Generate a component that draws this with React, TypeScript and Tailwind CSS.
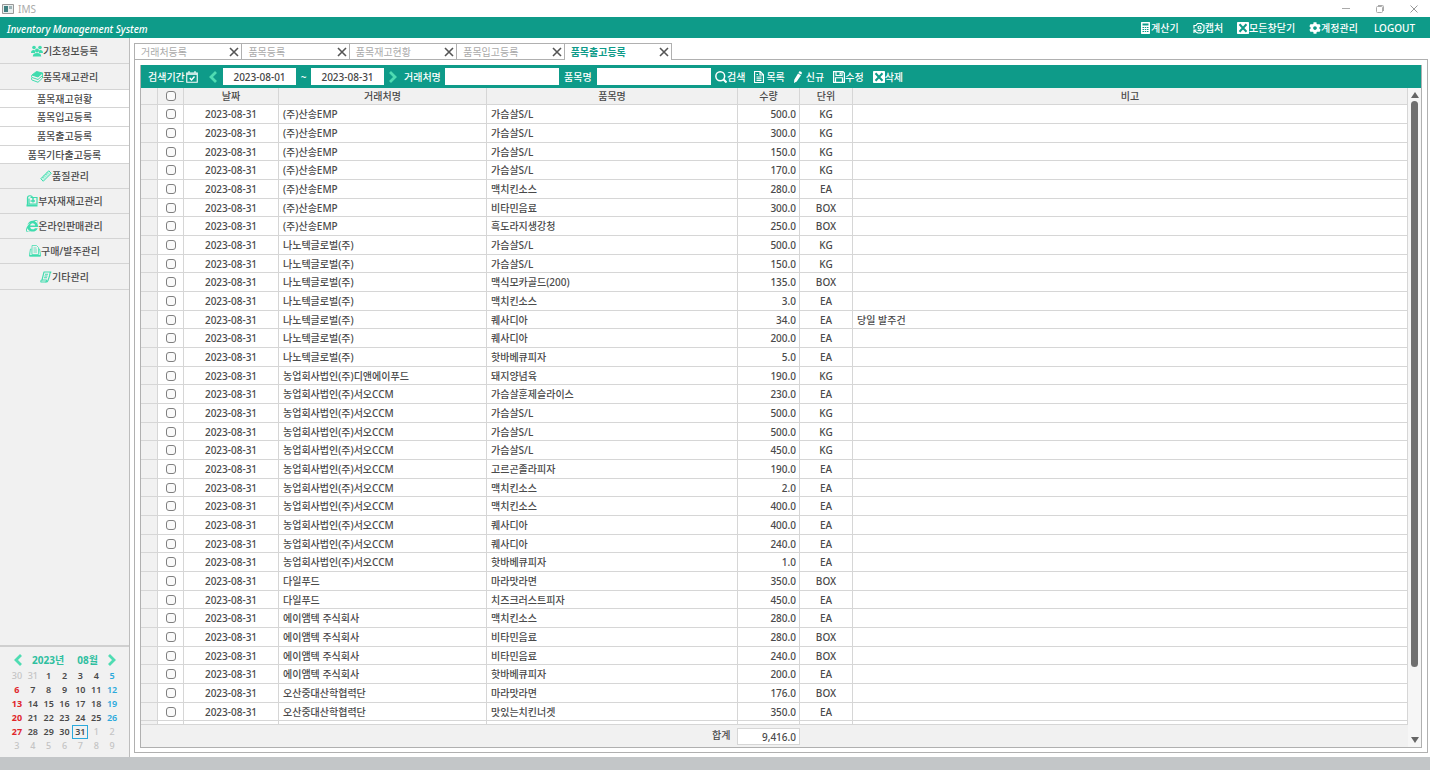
import React, { useState } from 'react';
import { FaInternetExplorer, FaCog } from 'react-icons/fa';

type IconProps = { className?: string };

const PeopleIcon: React.FC<IconProps> = ({ className }) => (
  <svg className={className} viewBox="0 0 24 24" fill="currentColor">
    <circle cx="6" cy="5" r="3.600" />
    <circle cx="18" cy="5" r="3.600" />
    <path d="M0 16c0-4 2-6 5-6 2 0 3 1 3.500 2.500L8 16H0zM24 16c0-4-2-6-5-6-2 0-3 1-3.500 2.500L16 16h8z" />
    <circle cx="12" cy="11" r="4" />
    <path d="M3.500 23c0-5 3.500-7 8.500-7s8.500 2 8.500 7z" />
  </svg>
);

const BooksIcon: React.FC<IconProps> = ({ className }) => (
  <svg className={className} viewBox="0 0 24 24" fill="none" stroke="currentColor" strokeWidth={2} strokeLinejoin="round">
    <path d="M2 8 11 1l12 3-9 8z" fill="currentColor" />
    <path d="M2 8c-2 1-1 5 0 5l12 4 9-8V4M2 13c-2 1-1 5 0 5l12 4.500 9-8.500V9" />
  </svg>
);

const RulerIcon: React.FC<IconProps> = ({ className }) => (
  <svg className={className} viewBox="0 0 24 24" stroke="currentColor" strokeWidth={2}>
    <path d="M1.500 17.500 17.500 1.500l5 5-16 16z" fill="#c4f3e4" />
    <path d="m5 14 2.500 2.500M8 11l2 2M11 8l2.500 2.500M14 5l2 2" fill="none" />
  </svg>
);

const StockIcon: React.FC<IconProps> = ({ className }) => (
  <svg className={className} viewBox="0 0 24 24" fill="none" stroke="currentColor" strokeWidth={2.4}>
    <path d="M3 20V7a5 5 0 0 1 10-1M9 5h13v13H6V7" />
    <path d="M14 6v9M9 12h9" strokeWidth={3} />
    <path d="M1 19h22v4H1z" fill="currentColor" stroke="none" />
  </svg>
);

const OrderIcon: React.FC<IconProps> = ({ className }) => (
  <svg className={className} viewBox="0 0 24 24" stroke="currentColor" strokeWidth={1.5}>
    <path d="M5 8H3L1 18v4h22v-4L21 8h-2" fill="#c4f3e4" />
    <path d="M6 19V1h9l4 4v14z" fill="#f1f1f1" />
    <path d="M9 6h6M9 10h7M9 14h7" fill="none" />
    <path d="M1 20h22v3H1z" fill="currentColor" stroke="none" />
  </svg>
);

const ScrollIcon: React.FC<IconProps> = ({ className }) => (
  <svg className={className} viewBox="0 0 24 24" fill="none" stroke="currentColor" strokeWidth={2.2} strokeLinejoin="round">
    <path d="M8 2h14c-3 2-2 4-3 8l-3 9c-1 3-3 3-4 3H2c-1-2 0-4 2-4z" />
    <path d="M10 6.500h6M9 10h6M8 13.500h6M4 18h9c0 2-1 4-2 4" />
  </svg>
);

const CalendarCheckIcon: React.FC<IconProps> = ({ className }) => (
  <svg className={className} viewBox="0 0 24 24" fill="none" stroke="currentColor" strokeWidth={2.2}>
    <path d="M1.500 4h21v18.500h-21zM6 0v5M18 0v5M2 6.500h20" />
    <path d="m7.500 14 3.500 4 6-7" strokeWidth={2.8} />
  </svg>
);

const CalculatorIcon: React.FC<IconProps> = ({ className }) => (
  <svg className={className} viewBox="0 0 18 24" fill="currentColor" fillRule="evenodd">
    <path d="M1 0h16l1 1v22l-1 1H1l-1-1V1zM3 3v4h12V3zM3 10v2h3v-2zm4.500 0v2h3v-2zm4.500 0v2h3v-2zM3 14v2h3v-2zm4.500 0v2h3v-2zm4.500 0v2h3v-2zM3 18v2h3v-2zm4.500 0v2h3v-2zm4.500 0v2h3v-2z" />
  </svg>
);

const CaptureIcon: React.FC<IconProps> = ({ className }) => (
  <svg className={className} viewBox="0 0 24 24" fill="none" stroke="currentColor" strokeWidth={2.4}>
    <path d="M2 13V7h4l3-4h8l2 3h3v9c0 4-2 6-5 7H8M2 22v-6h5M3 17c2 3 4 4 7 5" />
    <circle cx="13" cy="11" r="3" />
    <path d="M9 17h8" />
  </svg>
);

const BoxedXIcon: React.FC<IconProps> = ({ className }) => (
  <svg className={className} viewBox="0 0 24 24" fill="none">
    <rect width="24" height="24" rx="1.500" fill="currentColor" />
    <path d="m5 4.500 14 15M19 4.500l-14 15" stroke="#0e9b89" strokeWidth={4} />
  </svg>
);

const SearchIcon: React.FC<IconProps> = ({ className }) => (
  <svg className={className} viewBox="0 0 24 24" fill="none" stroke="currentColor" strokeWidth={3}>
    <circle cx="10.500" cy="10.500" r="8.800" />
    <path d="m17 17 6 6" strokeWidth={4} />
  </svg>
);

const DocumentIcon: React.FC<IconProps> = ({ className }) => (
  <svg className={className} viewBox="0 0 20 24" fill="none" stroke="currentColor" strokeWidth={2.4}>
    <path d="M1 1h11.500L19 7.500V23H1zM12 1v7h7M5 7h3M5 12h10M5 15.500h10M5 19h10" />
  </svg>
);

const PencilIcon: React.FC<IconProps> = ({ className }) => (
  <svg className={className} viewBox="0 0 16 24" fill="currentColor">
    <path d="M10.500 1c1-1.500 5.500 1 5.500 3l-1.500 3-5.500-3zM8 5l6 3.500L5.500 21 0 24l.5-6.500z" />
  </svg>
);

const SaveIcon: React.FC<IconProps> = ({ className }) => (
  <svg className={className} viewBox="0 0 24 24" fill="none" stroke="currentColor" strokeWidth={2.4}>
    <path d="M1.200 1.200H20l2.800 3v18.600H1.200zM6 1v8h12V1M5 23V13.500h14V23" />
    <path d="M13 3h3v4h-3z" fill="currentColor" stroke="none" />
  </svg>
);

const CrossIcon: React.FC<IconProps> = ({ className }) => (
  <svg className={className} viewBox="0 0 10 10" fill="none" stroke="currentColor" strokeWidth={1.6}>
    <path d="m1 1 8 8M9 1 1 9" />
  </svg>
);

const ChevronLeft: React.FC = () => (
  <svg className="h-3 w-2.5 text-[#4fdcb2]" viewBox="0 0 10 12" fill="none" stroke="currentColor" strokeWidth={2.8}>
    <path d="M8 1 3 6l5 5" />
  </svg>
);

const ChevronRight: React.FC = () => (
  <svg className="h-3 w-2.5 text-[#4fdcb2]" viewBox="0 0 10 12" fill="none" stroke="currentColor" strokeWidth={2.8}>
    <path d="m2 1 5 5-5 5" />
  </svg>
);

const upperMenu = [
  { label: '기초정보등록', Icon: PeopleIcon },
  { label: '품목재고관리', Icon: BooksIcon },
];
const subMenu = ['품목재고현황', '품목입고등록', '품목출고등록', '품목기타출고등록'];
const lowerMenu = [
  { label: '품질관리', Icon: RulerIcon },
  { label: '부자재재고관리', Icon: StockIcon },
  { label: '온라인판매관리', Icon: FaInternetExplorer },
  { label: '구매/발주관리', Icon: OrderIcon },
  { label: '기타관리', Icon: ScrollIcon },
];

const tabs = ['거래처등록', '품목등록', '품목재고현황', '품목입고등록', '품목출고등록'];

const A = '(주)산송EMP';
const B = '나노텍글로벌(주)';
const C = '농업회사법인(주)서오CCM';
const D = '다일푸드';
const E = '에이앰텍 주식회사';
const F = '오산중대산학협력단';

// customer, item, quantity, unit, note
const rows: string[][] = [
  [A, '가슴살S/L', '500.0', 'KG'],
  [A, '가슴살S/L', '300.0', 'KG'],
  [A, '가슴살S/L', '150.0', 'KG'],
  [A, '가슴살S/L', '170.0', 'KG'],
  [A, '맥치킨소스', '280.0', 'EA'],
  [A, '비타민음료', '300.0', 'BOX'],
  [A, '흑도라지생강청', '250.0', 'BOX'],
  [B, '가슴살S/L', '500.0', 'KG'],
  [B, '가슴살S/L', '150.0', 'KG'],
  [B, '맥식모카골드(200)', '135.0', 'BOX'],
  [B, '맥치킨소스', '3.0', 'EA'],
  [B, '퀘사디아', '34.0', 'EA', '당일 발주건'],
  [B, '퀘사디아', '200.0', 'EA'],
  [B, '핫바베큐피자', '5.0', 'EA'],
  ['농업회사법인(주)디앤에이푸드', '돼지양념육', '190.0', 'KG'],
  [C, '가슴살훈제슬라이스', '230.0', 'EA'],
  [C, '가슴살S/L', '500.0', 'KG'],
  [C, '가슴살S/L', '500.0', 'KG'],
  [C, '가슴살S/L', '450.0', 'KG'],
  [C, '고르곤졸라피자', '190.0', 'EA'],
  [C, '맥치킨소스', '2.0', 'EA'],
  [C, '맥치킨소스', '400.0', 'EA'],
  [C, '퀘사디아', '400.0', 'EA'],
  [C, '퀘사디아', '240.0', 'EA'],
  [C, '핫바베큐피자', '1.0', 'EA'],
  [D, '마라맛라면', '350.0', 'BOX'],
  [D, '치즈크러스트피자', '450.0', 'EA'],
  [E, '맥치킨소스', '280.0', 'EA'],
  [E, '비타민음료', '280.0', 'BOX'],
  [E, '비타민음료', '240.0', 'BOX'],
  [E, '핫바베큐피자', '200.0', 'EA'],
  [F, '마라맛라면', '176.0', 'BOX'],
  [F, '맛있는치킨너겟', '350.0', 'EA'],
];

const checkboxClass =
  'block mx-auto w-[10px] h-[10px] appearance-none rounded-[3px] border border-[#808080] bg-[#fafafa] checked:bg-[#0e9b89]';

const Sidebar: React.FC = () => (
  <nav className="flex flex-col">
    {upperMenu.map(({ label, Icon }) => (
      <button key={label} className="flex h-[26px] items-center justify-center border-b border-[#d4d4d4]">
        <Icon className="h-3 w-3 text-[#3fdcae]" />
        {label}
      </button>
    ))}
    <div className="flex flex-col bg-white">
      {subMenu.map((label) => (
        <button
          key={label}
          className="h-[19px] border-b border-[#d4d4d4] leading-[18px] first:h-[18px] last:h-[18px]"
        >
          {label}
        </button>
      ))}
    </div>
    {lowerMenu.map(({ label, Icon }) => (
      <button
        key={label}
        className="flex h-[25px] items-center justify-center border-b border-[#d4d4d4] last:h-[26px]"
      >
        <Icon className="h-3 w-3 text-[#3fdcae]" />
        {label}
      </button>
    ))}
  </nav>
);

const Calendar: React.FC = () => {
  // 42 cells starting from July 30
  const days = Array.from({ length: 42 }, (_, i) => {
    const offset = i - 1;
    if (offset < 1) return { day: 30 + i, current: false };
    if (offset > 31) return { day: offset - 31, current: false };
    return { day: offset, current: true };
  });

  const dayColor = (i: number, current: boolean) => {
    if (!current) return 'font-medium text-[#c4c4c4]';
    if (i % 7 === 0) return 'font-bold text-[#e0262b]';
    if (i % 7 === 6) return 'font-semibold text-[#2ba9dc]';
    return 'font-semibold text-[#4a4a4a]';
  };

  return (
    <div className="border-t-2 border-[#cfcfcf] px-[9px] pt-[5px] pb-1">
      <div className="flex h-4 items-center justify-between pr-[3px] pl-1 text-[#2fbf9f]">
        <button aria-label="이전 달"><ChevronLeft /></button>
        <span className="pr-1 font-bold">2023년</span>
        <span className="font-bold">08월</span>
        <button aria-label="다음 달"><ChevronRight /></button>
      </div>
      <div className="mt-px grid grid-cols-7 text-[9px] leading-[14px]">
        {days.map(({ day, current }, i) => (
          <button
            key={i}
            className={`h-[14px] ${dayColor(i, current)} ${
              current && day === 31 ? 'outline outline-[#2ba9dc] -outline-offset-1' : ''
            }`}
          >
            {day}
          </button>
        ))}
      </div>
    </div>
  );
};

const Toolbar: React.FC = () => {
  const [from, setFrom] = useState('2023-08-01');
  const [to, setTo] = useState('2023-08-31');

  return (
    <div className="flex h-[23px] shrink-0 items-center bg-[#0e9b89] pl-[7px] text-white">
      <label htmlFor="from" className="flex w-[60px] items-center gap-px">
        검색기간
        <CalendarCheckIcon className="h-3 w-3" />
      </label>
      <button aria-label="이전 기간" className="w-[15px]"><ChevronLeft /></button>
      <input
        id="from"
        value={from}
        onChange={(e) => setFrom(e.target.value)}
        className="h-[17px] w-[73px] bg-white text-center text-[#444]"
      />
      <label htmlFor="to" className="w-[15px] text-center">~</label>
      <input
        id="to"
        value={to}
        onChange={(e) => setTo(e.target.value)}
        className="h-[17px] w-[73px] bg-white text-center text-[#444]"
      />
      <button aria-label="다음 기간" className="w-[20px] pl-1"><ChevronRight /></button>
      <label htmlFor="customer" className="w-[41px]">거래처명</label>
      <input id="customer" className="h-[17px] w-[114px] bg-white px-1 text-[#444]" />
      <label htmlFor="item" className="w-[38px] pl-[5px]">품목명</label>
      <input id="item" className="h-[17px] w-[114px] bg-white px-1 text-[#444]" />
      <div className="flex items-center gap-[9px] pl-1">
        <button className="flex items-center"><SearchIcon className="h-3 w-3" />검색</button>
        <button className="flex items-center gap-0.5"><DocumentIcon className="h-3 w-2.5" />목록</button>
        <button className="flex items-center gap-1"><PencilIcon className="h-3 w-2" />신규</button>
        <button className="flex items-center"><SaveIcon className="h-3 w-3" />수정</button>
        <button className="flex items-center"><BoxedXIcon className="h-3 w-3" />삭제</button>
      </div>
    </div>
  );
};

const StockTable: React.FC = () => {
  const th = 'border-r border-b border-[#d6d6d6] bg-[#f1f1f1] p-0 font-medium';
  const td = 'border-r border-b border-[#d6d6d6] p-0';

  return (
    <div className="min-h-0 flex-1 overflow-hidden border-b border-[#d6d6d6]">
      <table className="w-full table-fixed border-separate border-spacing-0 bg-white leading-[14px]">
        <colgroup>
          <col className="w-[17px]" />
          <col className="w-[26px]" />
          <col className="w-[95px]" />
          <col className="w-[208px]" />
          <col className="w-[251px]" />
          <col className="w-[62px]" />
          <col className="w-[53px]" />
          <col />
        </colgroup>
        <thead>
          <tr className="h-[17px]">
            <th className={th} />
            <th className={th}><input type="checkbox" aria-label="전체 선택" className={checkboxClass} /></th>
            <th className={th}>날짜</th>
            <th className={th}>거래처명</th>
            <th className={th}>품목명</th>
            <th className={th}>수량</th>
            <th className={th}>단위</th>
            <th className={th}>비고</th>
          </tr>
        </thead>
        <tbody>
          {rows.map(([customer, item, quantity, unit, note], i) => (
            <tr key={i} className="h-[19px] nth-[3n]:h-[18px]">
              <td className={`${td} bg-[#f1f1f1]`} />
              <td className={td}>
                <input type="checkbox" aria-label={`${i + 1}행 선택`} className={checkboxClass} />
              </td>
              <td className={`${td} text-center`}>2023-08-31</td>
              <td className={`${td} pl-1`}>{customer}</td>
              <td className={`${td} pl-1`}>{item}</td>
              <td className={`${td} pr-[3px] text-right`}>{quantity}</td>
              <td className={`${td} text-center`}>{unit}</td>
              <td className={`${td} pl-1`}>{note}</td>
            </tr>
          ))}
          <tr className="h-[19px]">
            <td className={`${td} bg-[#f1f1f1]`} />
            {Array.from({ length: 7 }, (_, i) => (
              <td key={i} className={td} />
            ))}
          </tr>
        </tbody>
      </table>
    </div>
  );
};

const App: React.FC = () => (
  <div className="flex h-screen flex-col bg-white font-['Noto_Sans','Noto_Sans_CJK_KR',sans-serif] text-[10px] leading-[14px] font-medium text-[#4a4a4a]">
    {/* Window title bar */}
    <div className="flex h-[17px] shrink-0 items-center justify-between pr-3 pl-0.5 text-[#aaa]">
      <div className="flex items-center gap-1">
        <svg className="h-2.5 w-3" viewBox="0 0 12 10">
          <path d="M.5.5h11v9H.5z" fill="#e8eeee" stroke="#999" />
          <path d="M2 2h4v6H2z" fill="#3f7f80" />
          <path d="M7 2h3v3H7z" fill="#9fb4b8" />
        </svg>
        <span className="font-normal">IMS</span>
      </div>
      <div className="flex items-center gap-[26px]">
        <button aria-label="최소화" className="h-px w-2 bg-[#aaa]" />
        <button aria-label="창 크기 조절">
          <svg className="h-2 w-2" viewBox="0 0 8 8" fill="none" stroke="#aaa">
            <rect x=".5" y="1.500" width="6" height="6" rx="1" />
            <path d="M2 .5h4.500q1 0 1 1V6" />
          </svg>
        </button>
        <button aria-label="닫기">
          <svg className="h-2 w-2" viewBox="0 0 8 8" fill="none" stroke="#999">
            <path d="m.5.5 7 7M7.500.5l-7 7" />
          </svg>
        </button>
      </div>
    </div>

    {/* Header */}
    <header className="flex h-[21px] shrink-0 items-center justify-between bg-[#0e9b89] pr-[15px] pl-[7px] text-white">
      <h1 className="pt-0.5 font-medium italic">Inventory Management System</h1>
      <div className="flex items-center">
        <button className="mr-3.5 flex items-center gap-px"><CalculatorIcon className="h-3 w-[9px]" />계산기</button>
        <button className="mr-3.5 flex items-center"><CaptureIcon className="h-3 w-3" />캡처</button>
        <button className="mr-3.5 flex items-center"><BoxedXIcon className="h-3 w-3" />모든창닫기</button>
        <button className="mr-4 flex items-center"><FaCog className="h-3 w-3" />계정관리</button>
        <button>LOGOUT</button>
      </div>
    </header>

    <div className="flex min-h-0 flex-1">
      <aside className="flex w-[130px] shrink-0 flex-col justify-between border-r border-[#bdbdbd] bg-[#f1f1f1]">
        <Sidebar />
        <Calendar />
      </aside>

      <main className="flex min-w-0 flex-1 flex-col pt-[5px] pr-0.5 pb-1 pl-1">
        <div className="flex h-[17px] shrink-0">
          <div className="flex w-[538px] border-l border-[#b0b0b0]">
            {tabs.map((tab, i) => {
              const active = i === tabs.length - 1;
              return (
                <div
                  key={tab}
                  className={`flex flex-1 items-center justify-between border-t border-r border-[#b0b0b0] pr-0.5 pl-1.5 ${
                    active ? 'font-bold text-[#0e9b89]' : 'border-b font-normal text-[#aaa]'
                  }`}
                >
                  <button>{tab}</button>
                  <button aria-label={`${tab} 닫기`}><CrossIcon className="h-2.5 w-2.5 text-[#555]" /></button>
                </div>
              );
            })}
          </div>
          <div className="flex-1 border-b border-[#b0b0b0]" />
        </div>

        <div className="flex min-h-0 flex-1 flex-col border-x border-b border-[#b0b0b0] px-[5px] pt-[5px] pb-1">
          <section className="flex min-h-0 flex-1 flex-col border-x border-b border-[#b0b0b0] bg-[#f1f1f1]">
            <Toolbar />
            <div className="flex min-h-0 flex-1">
              <div className="flex min-w-0 flex-1 flex-col">
                <StockTable />
                <div className="flex h-[22px] shrink-0 pt-[3px] pl-[571px]">
                  <label htmlFor="total" className="w-[25px]">합계</label>
                  <input
                    id="total"
                    readOnly
                    value="9,416.0"
                    className="h-[17px] w-[63px] border border-[#d6d6d6] bg-white pr-[3px] text-right"
                  />
                </div>
              </div>
              {/* Scroll track */}
              <div className="flex w-[13px] flex-col items-center bg-[#f6f6f6] py-1">
                <svg className="h-1.5 w-2" viewBox="0 0 8 6" fill="#666"><path d="M4 0 8 6H0z" /></svg>
                <div className="flex flex-1 flex-col pt-[3px]">
                  <div className="h-[89%] w-[7px] rounded-full bg-[#707070]" />
                </div>
                <svg className="h-1.5 w-2" viewBox="0 0 8 6" fill="#666"><path d="M4 6 8 0H0z" /></svg>
              </div>
            </div>
          </section>
        </div>
      </main>
    </div>

    <footer className="h-[13px] shrink-0 bg-[#c3c6c8]" />
  </div>
);

export default App;
